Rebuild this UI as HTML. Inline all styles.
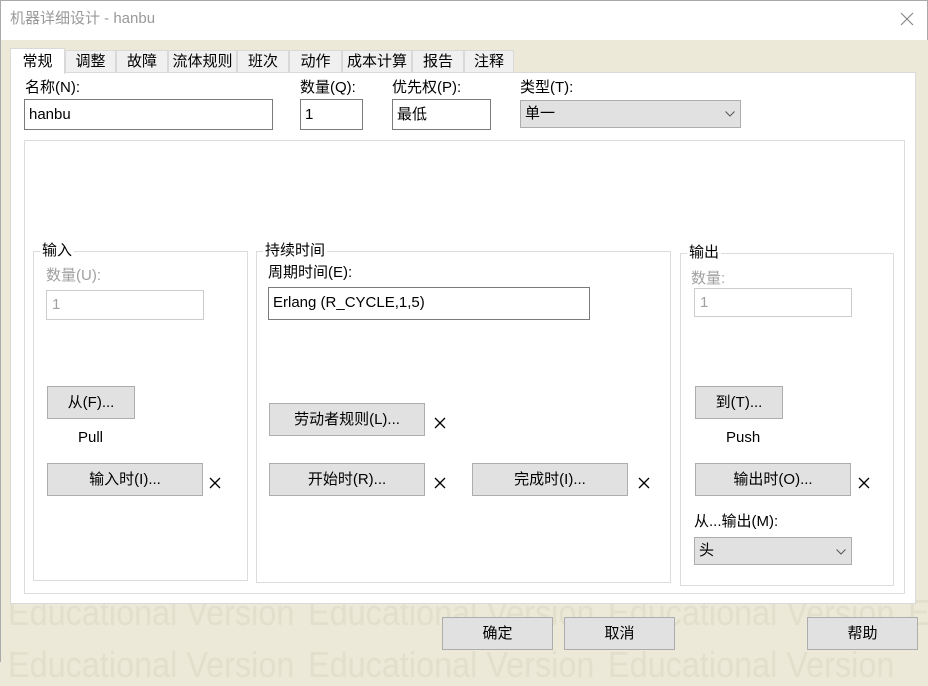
<!DOCTYPE html>
<html><head><meta charset="utf-8"><style>
*{box-sizing:border-box;margin:0;padding:0}
body{width:928px;height:662px;position:relative;overflow:hidden;background:#ece9d8;font-family:"Liberation Sans","Noto Sans CJK SC",sans-serif;font-size:15px;color:#000}
.a{position:absolute}
.t{position:absolute;white-space:nowrap;line-height:18px}
.inp{position:absolute;background:#fff;border:1px solid #7a7a7a;padding-left:4px;line-height:26px;font-size:15px}
.btn{position:absolute;background:#e1e1e1;border:1px solid #adadad;text-align:center;font-size:15px}
.grp{position:absolute;border:1px solid #dcdcdc}
.gl{position:absolute;background:#fff;padding:0 2px;line-height:16px;top:-9px;left:6px}
.x{position:absolute}
.tab{position:absolute;top:50px;height:22px;background:#f0f0f0;border:1px solid #d9d9d9;border-bottom:none;line-height:22px;text-align:center;font-size:15px}
.wm{position:absolute;font-size:36px;color:#e2dfcc;white-space:nowrap;transform:scaleX(.9);transform-origin:left top}
</style></head><body>
<div class="a" style="left:0;top:0;width:928px;height:40px;background:#fff;border:1px solid #aaa;border-bottom:none"></div>
<div class="t" style="left:10px;top:10px;color:#999;font-size:15px">机器详细设计 - hanbu</div>
<svg class="a" style="left:900px;top:12px" width="14" height="14"><path d="M1 1L13 13M13 1L1 13" stroke="#888" stroke-width="1.2"/></svg>
<div class="a" style="left:0;top:40px;width:1px;height:622px;background:#aaa"></div>

<div class="wm" style="left:8px;top:592px">Educational Version</div>
<div class="wm" style="left:308px;top:592px">Educational Version</div>
<div class="wm" style="left:608px;top:592px">Educational Version</div>
<div class="wm" style="left:908px;top:592px">E</div>
<div class="wm" style="left:8px;top:644px">Educational Version</div>
<div class="wm" style="left:308px;top:644px">Educational Version</div>
<div class="wm" style="left:608px;top:644px">Educational Version</div>

<div class="a" style="left:10px;top:72px;width:906px;height:532px;background:#fff;border:1px solid #d9d9d9"></div>
<div class="tab" style="left:65px;width:51px">调整</div>
<div class="tab" style="left:116px;width:52px">故障</div>
<div class="tab" style="left:168px;width:69px">流体规则</div>
<div class="tab" style="left:237px;width:52px">班次</div>
<div class="tab" style="left:289px;width:53px">动作</div>
<div class="tab" style="left:342px;width:70px">成本计算</div>
<div class="tab" style="left:412px;width:52px">报告</div>
<div class="tab" style="left:464px;width:50px">注释</div>
<div class="tab" style="left:10px;top:48px;width:55px;height:26px;background:#fff;line-height:26px;border-color:#d9d9d9">常规</div>

<div class="t" style="left:25px;top:79px">名称(N):</div>
<div class="inp" style="left:24px;top:99px;width:249px;height:31px;line-height:29px">hanbu</div>
<div class="t" style="left:300px;top:79px">数量(Q):</div>
<div class="inp" style="left:300px;top:99px;width:63px;height:31px;line-height:29px">1</div>
<div class="t" style="left:392px;top:79px">优先权(P):</div>
<div class="inp" style="left:392px;top:99px;width:99px;height:31px;line-height:29px">最低</div>
<div class="t" style="left:520px;top:79px">类型(T):</div>
<div class="a" style="left:520px;top:100px;width:221px;height:28px;background:#e1e1e1;border:1px solid #adadad;padding-left:4px;line-height:26px">单一</div>
<svg class="a" style="left:725px;top:111px" width="10" height="6"><path d="M0.5 0.5L5 5L9.5 0.5" stroke="#555" fill="none"/></svg>

<div class="grp" style="left:24px;top:140px;width:881px;height:454px"></div>

<div class="grp" style="left:33px;top:251px;width:215px;height:330px"><span class="gl">输入</span></div>
<div class="t" style="left:46px;top:267px;color:#a0a0a0">数量(U):</div>
<div class="a" style="left:46px;top:290px;width:158px;height:30px;border:1px solid #ccc;padding-left:5px;line-height:28px;color:#a0a0a0;font-size:15px">1</div>
<div class="btn" style="left:47px;top:386px;width:88px;height:33px;line-height:31px">从(F)...</div>
<div class="t" style="left:78px;top:429px">Pull</div>
<div class="btn" style="left:47px;top:463px;width:156px;height:33px;line-height:31px">输入时(I)...</div>
<svg class="x" style="left:209px;top:477px" width="12" height="12"><path d="M1 1L11 11M11 1L1 11" stroke="#000" stroke-width="1.3"/></svg>

<div class="grp" style="left:256px;top:251px;width:415px;height:332px"><span class="gl">持续时间</span></div>
<div class="t" style="left:268px;top:264px">周期时间(E):</div>
<div class="inp" style="left:268px;top:287px;width:322px;height:33px;line-height:29px">Erlang (R_CYCLE,1,5)</div>
<div class="btn" style="left:269px;top:403px;width:156px;height:33px;line-height:31px">劳动者规则(L)...</div>
<svg class="x" style="left:434px;top:417px" width="12" height="12"><path d="M1 1L11 11M11 1L1 11" stroke="#000" stroke-width="1.3"/></svg>
<div class="btn" style="left:269px;top:463px;width:156px;height:33px;line-height:31px">开始时(R)...</div>
<svg class="x" style="left:434px;top:477px" width="12" height="12"><path d="M1 1L11 11M11 1L1 11" stroke="#000" stroke-width="1.3"/></svg>
<div class="btn" style="left:472px;top:463px;width:156px;height:33px;line-height:31px">完成时(I)...</div>
<svg class="x" style="left:638px;top:477px" width="12" height="12"><path d="M1 1L11 11M11 1L1 11" stroke="#000" stroke-width="1.3"/></svg>

<div class="grp" style="left:680px;top:253px;width:214px;height:333px"><span class="gl">输出</span></div>
<div class="t" style="left:691px;top:270px;color:#a0a0a0">数量:</div>
<div class="a" style="left:694px;top:288px;width:158px;height:29px;border:1px solid #ccc;padding-left:5px;line-height:27px;color:#a0a0a0;font-size:15px">1</div>
<div class="btn" style="left:695px;top:386px;width:88px;height:33px;line-height:31px">到(T)...</div>
<div class="t" style="left:726px;top:429px">Push</div>
<div class="btn" style="left:695px;top:463px;width:156px;height:33px;line-height:31px">输出时(O)...</div>
<svg class="x" style="left:858px;top:477px" width="12" height="12"><path d="M1 1L11 11M11 1L1 11" stroke="#000" stroke-width="1.3"/></svg>
<div class="t" style="left:694px;top:513px">从...输出(M):</div>
<div class="a" style="left:694px;top:537px;width:158px;height:28px;background:#e1e1e1;border:1px solid #adadad;padding-left:4px;line-height:26px">头</div>
<svg class="a" style="left:836px;top:549px" width="10" height="6"><path d="M0.5 0.5L5 5L9.5 0.5" stroke="#555" fill="none"/></svg>

<div class="btn" style="left:442px;top:617px;width:111px;height:33px;line-height:31px">确定</div>
<div class="btn" style="left:564px;top:617px;width:111px;height:33px;line-height:31px">取消</div>
<div class="btn" style="left:807px;top:617px;width:111px;height:33px;line-height:31px">帮助</div>
</body></html>
